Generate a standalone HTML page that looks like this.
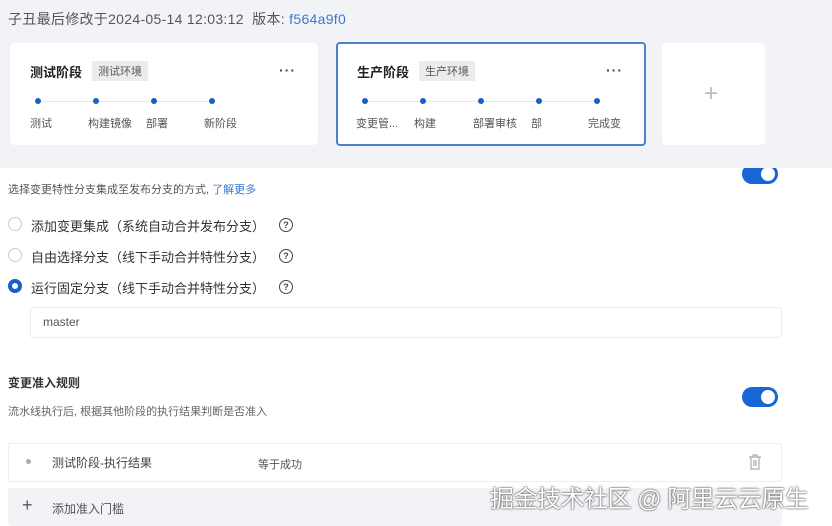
<!DOCTYPE html>
<html><head><meta charset="utf-8"><style>
*{margin:0;padding:0;box-sizing:border-box}
body{width:832px;height:526px;overflow:hidden;background:#fff;font-family:"Liberation Sans","Noto Sans CJK SC",sans-serif;color:#333;position:relative}
.a{position:absolute;white-space:nowrap}
.top{position:absolute;left:0;top:0;width:832px;height:168px;background:#f2f3f7;z-index:2}
.card{position:absolute;background:#fff;border-radius:4px;z-index:3}
.z{z-index:4}
.tt{font-size:13px;font-weight:bold;color:#222}
.tag{font-size:11px;background:#ececec;color:#555;padding:2px 6px}
.dot{position:absolute;width:6px;height:6px;border-radius:50%;background:#1660c8}
.ln{position:absolute;height:1px;background:#e6e6e6}
.lb{font-size:11px;color:#555}
.dots{font-size:14px;color:#444;letter-spacing:1px;font-weight:bold}
.tog{position:absolute;width:36px;height:20px;border-radius:10px;background:#1666d6}
.tog::after{content:"";position:absolute;right:3px;top:3px;width:14px;height:14px;border-radius:50%;background:#fff}
.rad{position:absolute;width:14px;height:14px;border-radius:50%;border:1px solid #ccc;background:#fff}
.rt{font-size:13px;color:#333}
.q{position:absolute;width:14px;height:14px;border-radius:50%;border:1.3px solid #444;font-size:9px;text-align:center;line-height:12px;color:#444;font-weight:bold}
</style></head><body>
<div class="top"></div>
<div class="a z" style="left:8px;top:9px;font-size:14px;letter-spacing:0.3px;color:#555">子丑最后修改于2024-05-14 12:03:12 &nbsp;版本: <span style="color:#3a78d0">f564a9f0</span></div>

<div class="card" style="left:10px;top:43px;width:308px;height:102px"></div>
<div class="a tt z" style="left:30px;top:62px">测试阶段</div>
<div class="a tag z" style="left:92px;top:61px">测试环境</div>
<div class="a dots z" style="left:279px;top:62px">···</div>
<div class="ln z" style="left:40px;top:101px;width:172px"></div>
<div class="dot z" style="left:35px;top:98px"></div><div class="dot z" style="left:93px;top:98px"></div><div class="dot z" style="left:151px;top:98px"></div><div class="dot z" style="left:209px;top:98px"></div>
<div class="a lb z" style="left:30px;top:115px">测试</div>
<div class="a lb z" style="left:88px;top:115px">构建镜像</div>
<div class="a lb z" style="left:146px;top:115px">部署</div>
<div class="a lb z" style="left:204px;top:115px">新阶段</div>

<div class="card" style="left:336px;top:42px;width:310px;height:104px;border:2px solid #4a80cc"></div>
<div class="a tt z" style="left:357px;top:62px">生产阶段</div>
<div class="a tag z" style="left:419px;top:61px">生产环境</div>
<div class="a dots z" style="left:606px;top:62px">···</div>
<div class="ln z" style="left:366px;top:101px;width:232px"></div>
<div class="dot z" style="left:362px;top:98px"></div><div class="dot z" style="left:420px;top:98px"></div><div class="dot z" style="left:478px;top:98px"></div><div class="dot z" style="left:536px;top:98px"></div><div class="dot z" style="left:594px;top:98px"></div>
<div class="a lb z" style="left:356px;top:115px">变更管...</div>
<div class="a lb z" style="left:414px;top:115px">构建</div>
<div class="a lb z" style="left:473px;top:115px">部署审核</div>
<div class="a lb z" style="left:531px;top:115px">部</div>
<div class="a lb z" style="left:588px;top:115px">完成变</div>

<div class="card" style="left:662px;top:43px;width:103px;height:102px"></div>
<div class="a z" style="left:704px;top:80px;font-size:24px;color:#bbb;font-weight:200">+</div>

<div class="tog" style="left:742px;top:164px"></div>
<div class="a" style="left:8px;top:181px;font-size:11px;color:#555">选择变更特性分支集成至发布分支的方式, <span style="color:#3a78d0">了解更多</span></div>
<div class="rad" style="left:8px;top:217px"></div>
<div class="a rt" style="left:31px;top:216px">添加变更集成（系统自动合并发布分支）</div>
<div class="q" style="left:279px;top:218px">?</div>
<div class="rad" style="left:8px;top:248px"></div>
<div class="a rt" style="left:31px;top:247px">自由选择分支（线下手动合并特性分支）</div>
<div class="q" style="left:279px;top:249px">?</div>
<div class="rad" style="left:8px;top:279px;border:4px solid #1660c8"></div>
<div class="a rt" style="left:31px;top:278px">运行固定分支（线下手动合并特性分支）</div>
<div class="q" style="left:279px;top:280px">?</div>
<div style="position:absolute;left:30px;top:307px;width:752px;height:31px;border:1px solid #ececec;border-radius:3px"></div>
<div class="a" style="left:43px;top:315px;font-size:12px;color:#555">master</div>

<div class="a" style="left:8px;top:374px;font-size:12px;font-weight:bold;color:#333">变更准入规则</div>
<div class="a" style="left:8px;top:403px;font-size:11px;color:#666">流水线执行后, 根据其他阶段的执行结果判断是否准入</div>
<div class="tog" style="left:742px;top:387px"></div>
<div style="position:absolute;left:8px;top:443px;width:774px;height:39px;border:1px solid #eee;border-radius:3px"></div>
<div class="dot" style="left:26px;top:459px;background:#aaa;width:5px;height:5px"></div>
<div class="a" style="left:52px;top:454px;font-size:12px;color:#444">测试阶段-执行结果</div>
<div class="a" style="left:258px;top:456px;font-size:11px;color:#555">等于成功</div>
<svg class="a" style="left:748px;top:454px" width="14" height="16" viewBox="0 0 14 16" fill="none" stroke="#aaa" stroke-width="1.2"><path d="M1 3h12M5 3V1h4v2M3 3v12h8V3M6 6v6M8 6v6"/></svg>
<div style="position:absolute;left:8px;top:488px;width:774px;height:38px;background:#f2f3f6;border-radius:3px"></div>
<div class="a" style="left:22px;top:495px;font-size:18px;color:#555">+</div>
<div class="a" style="left:52px;top:500px;font-size:12px;color:#555">添加准入门槛</div>
<div class="a" style="left:490px;top:479px;font-size:24px;letter-spacing:-0.5px;color:#fff;text-shadow:0 0 2px #444,0 0 1px #444">掘金技术社区 @ 阿里云云原生</div>
</body></html>
